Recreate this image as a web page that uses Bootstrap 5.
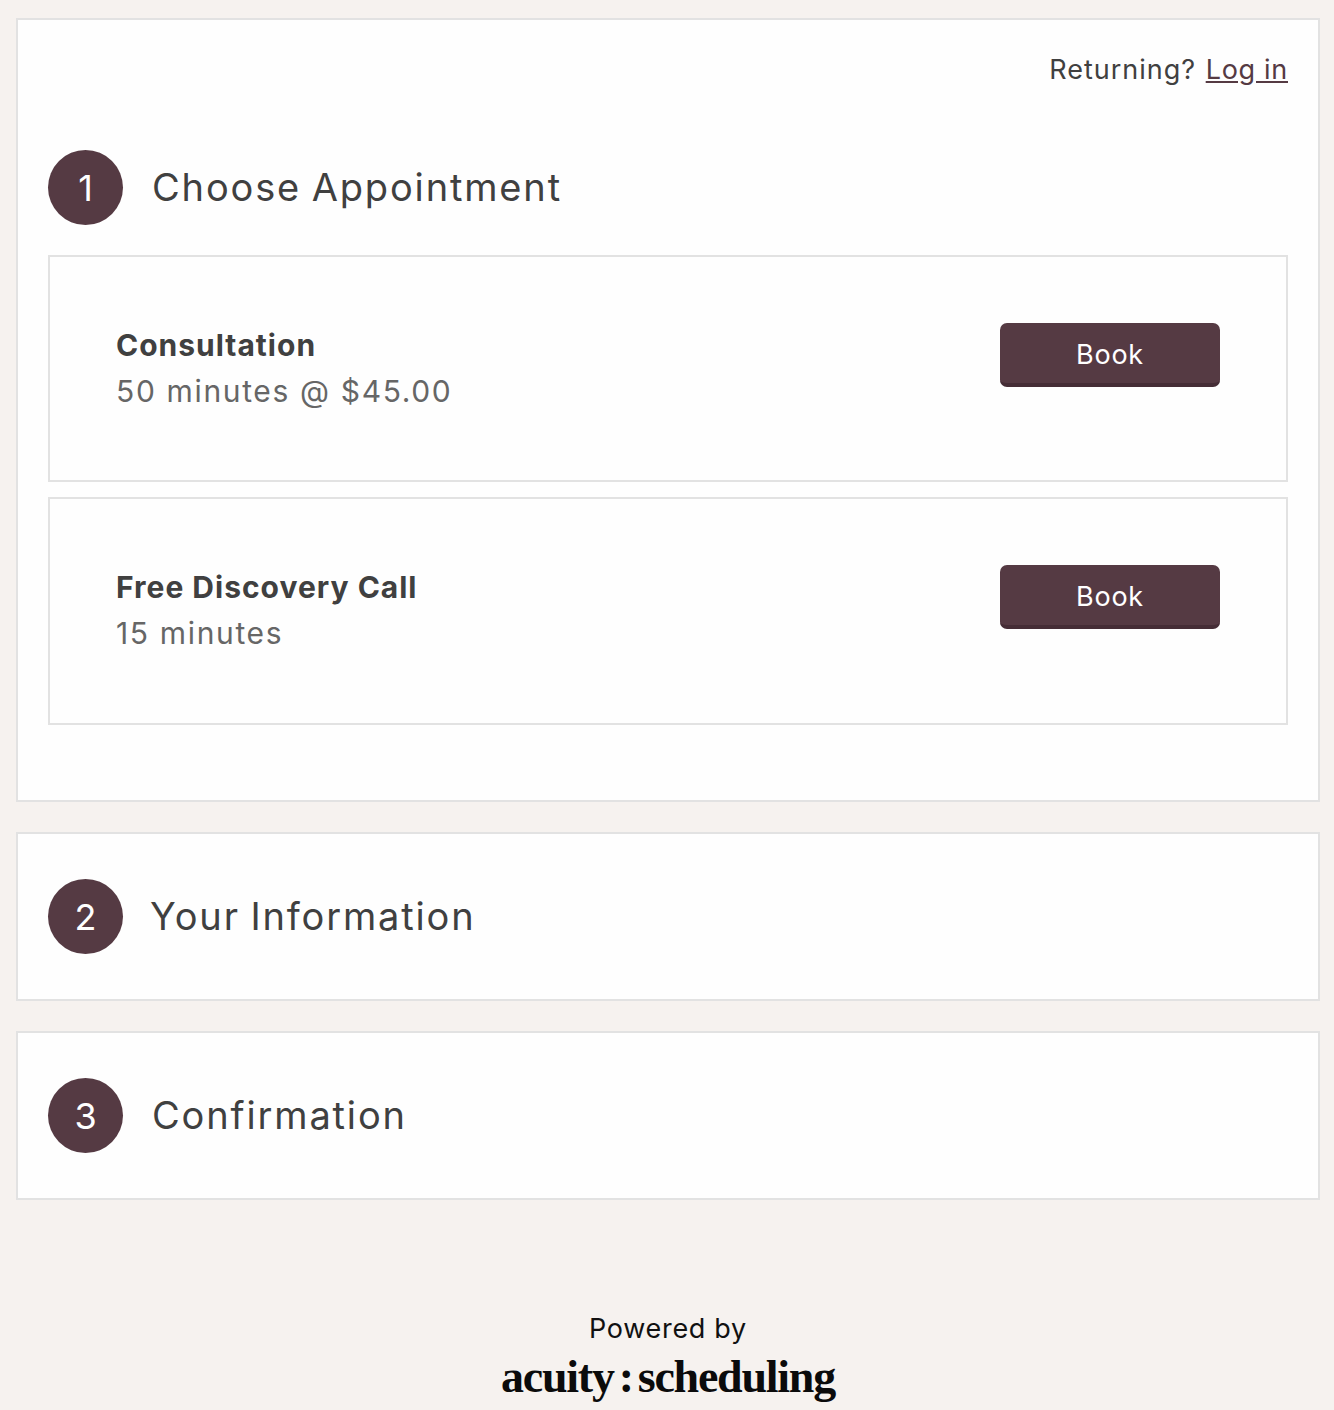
<!DOCTYPE html>
<html lang="en"><head><meta charset="utf-8"><title>Schedule</title>
<link href="https://cdn.jsdelivr.net/npm/bootstrap@5.3.0/dist/css/bootstrap.min.css" rel="stylesheet">
<style>
html,body{height:100%}
body{background:#f6f2ef;font-family:"Inter","Noto Sans",sans-serif;color:#404040;padding:18px 14px 0 16px;overflow:hidden}
.step-panel{background:#fefefe;border:2px solid #e2e2e2;padding:0 30px}
.step-panel+.step-panel{margin-top:30px}
.panel-one{height:784px}
.panel-fold{height:169px}
.login-line{height:130px;padding-top:20px;font-size:27px;line-height:60px;text-align:right;letter-spacing:1px}
.login-line a{color:#553a43;margin-left:1px;letter-spacing:.7px}
.step-num{width:75px;height:75px;background:#553a43;color:#fff;font-size:36px;flex:none}
.step-title{font-size:38px;font-weight:400;color:#404040;margin:0;letter-spacing:1.85px;word-spacing:-2px;line-height:75px}
.head-gap{gap:29px}
.head-gap-sm{gap:27px}
.head-space{height:30px}
.panel-fold .step-head{padding-top:45px}
.offer{background:#fefefe;border:2px solid #e2e2e2;height:227px;padding:65px 66px 0}
.offer+.offer{margin-top:15px;height:228px}
.offer-name{font-size:30px;font-weight:700;line-height:46px;color:#404040;letter-spacing:1px}
.offer-meta{font-size:30px;line-height:46px;color:#666;letter-spacing:1.65px}
.book-btn{width:220px;height:64px;margin-top:1px;background:#553a43;border:0;border-bottom:4px solid #452d36;border-radius:7px;color:#fff;font-size:27px;line-height:1;padding:2px 0 0;letter-spacing:.75px}
.book-btn:hover{background:#553a43;color:#fff}
.foot-block{padding-top:111px;text-align:center;color:#111}
.foot-by{font-size:27px;line-height:36px;font-weight:400;letter-spacing:.7px}
.foot-logo{font-family:"Liberation Serif",serif;font-weight:700;font-size:46px;line-height:54px;letter-spacing:-1.25px;color:#0b0b0b;white-space:nowrap;gap:5px;margin-top:3px}
</style></head>
<body>
<section class="step-panel panel-one">
  <div class="login-line">Returning? <a href="#">Log in</a></div>
  <div class="step-head d-flex align-items-center head-gap">
    <div class="step-num rounded-circle d-flex align-items-center justify-content-center">1</div>
    <h2 class="step-title">Choose Appointment</h2>
  </div>
  <div class="head-space"></div>
  <div class="offer d-flex justify-content-between align-items-start">
    <div><div class="offer-name">Consultation</div><div class="offer-meta">50 minutes @ $45.00</div></div>
    <button class="btn book-btn">Book</button>
  </div>
  <div class="offer d-flex justify-content-between align-items-start">
    <div><div class="offer-name">Free Discovery Call</div><div class="offer-meta">15 minutes</div></div>
    <button class="btn book-btn">Book</button>
  </div>
</section>
<section class="step-panel panel-fold">
  <div class="step-head d-flex align-items-center head-gap-sm">
    <div class="step-num rounded-circle d-flex align-items-center justify-content-center">2</div>
    <h2 class="step-title">Your Information</h2>
  </div>
</section>
<section class="step-panel panel-fold">
  <div class="step-head d-flex align-items-center head-gap">
    <div class="step-num rounded-circle d-flex align-items-center justify-content-center">3</div>
    <h2 class="step-title">Confirmation</h2>
  </div>
</section>
<footer class="foot-block">
  <div class="foot-by">Powered by</div>
  <div class="foot-logo d-flex justify-content-center"><span>acuity</span><span>:</span><span>scheduling</span></div>
</footer>
</body></html>
